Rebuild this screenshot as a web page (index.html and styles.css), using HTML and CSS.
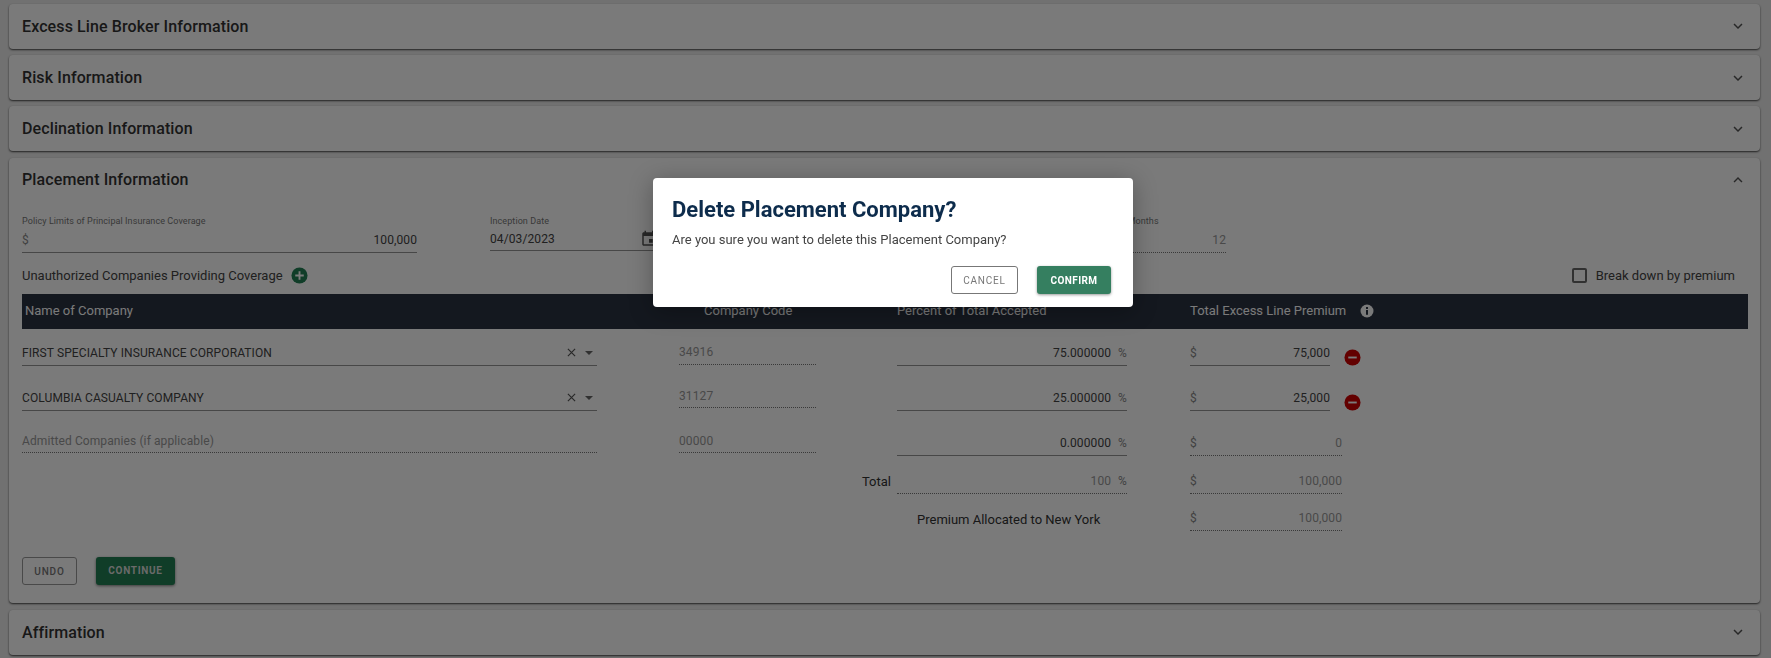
FILE: index.html
```html
<!DOCTYPE html>
<html lang="en">
<head>
  <meta charset="UTF-8">
  <meta name="viewport" content="width=device-width, initial-scale=1.0">
  <title>Placement Information</title>
  <link rel="stylesheet" href="styles.css">
</head>
<body>
  <div class="accordion">
    <section class="panel">
      <div class="panel-head"><h2>Excess Line Broker Information</h2><svg class="chevron" viewBox="0 0 24 24"><path d="M7.4 8.6 12 13.2l4.6-4.6L18 10l-6 6-6-6z"/></svg></div>
    </section>
    <section class="panel">
      <div class="panel-head"><h2>Risk Information</h2><svg class="chevron" viewBox="0 0 24 24"><path d="M7.4 8.6 12 13.2l4.6-4.6L18 10l-6 6-6-6z"/></svg></div>
    </section>
    <section class="panel">
      <div class="panel-head"><h2>Declination Information</h2><svg class="chevron" viewBox="0 0 24 24"><path d="M7.4 8.6 12 13.2l4.6-4.6L18 10l-6 6-6-6z"/></svg></div>
    </section>

    <section class="panel panel-open">
      <div class="panel-head"><h2>Placement Information</h2><svg class="chevron" viewBox="0 0 24 24"><path d="M12 8l6 6-1.4 1.4-4.6-4.6-4.6 4.6L6 14z"/></svg></div>

      <!-- Top fields -->
      <div class="top-fields">
        <div class="top-field">
          <label>Policy Limits of Principal Insurance Coverage</label>
          <div class="field"><span class="affix">$</span><span>100,000</span></div>
        </div>
        <div class="top-field">
          <label>Inception Date</label>
          <div class="field field-date">
            <span>04/03/2023</span>
            <svg class="calendar" viewBox="0 0 24 24"><path d="M17 12h-5v5h5v-5zM16 1v2H8V1H6v2H5c-1.1 0-2 .9-2 2v14c0 1.1.9 2 2 2h14c1.1 0 2-.9 2-2V5c0-1.1-.9-2-2-2h-1V1h-2zm3 18H5V8h14v11z"/></svg>
          </div>
        </div>
        <div class="top-field"></div>
        <div class="top-field">
          <label>Policy Term in Months</label>
          <div class="field field-off"><span></span><span class="muted">12</span></div>
        </div>
      </div>

      <div class="companies-bar">
        <div class="companies-title">
          <span>Unauthorized Companies Providing Coverage</span>
          <svg class="round-icon" viewBox="0 0 18 18"><circle class="fill-add" cx="9" cy="9" r="8.5"/><path class="glyph" d="M8 4.5h2V8h3.5v2H10v3.5H8V10H4.500V8H8z"/></svg>
        </div>
        <div class="breakdown"><span class="checkbox"></span><span>Break down by premium</span></div>
      </div>

      <!-- Company table -->
      <div class="table-head grid">
        <div class="name-head">Name of Company</div>
        <div class="code-head">Company Code</div>
        <div>Percent of Total Accepted</div>
        <div class="premium-head">
          <span>Total Excess Line Premium</span>
          <svg class="info" viewBox="0 0 14 14"><circle cx="7" cy="7" r="6.500"/><path class="info-i" d="M6 6h2v4.800H6zM6 3h2v2H6z"/></svg>
        </div>
      </div>

      <div class="grid row row-first">
        <div class="field field-name">
          <span>FIRST SPECIALTY INSURANCE CORPORATION</span>
          <span class="select-tools"><svg class="clear" viewBox="0 0 10 10"><path d="M1 1l8 8M9 1 1 9"/></svg><i class="caret"></i></span>
        </div>
        <div class="field field-off field-code code-first"><span class="muted">34916</span></div>
        <div class="field field-pct"><span>75.000000</span><span class="affix pct">%</span></div>
        <div class="premium-cell">
          <div class="field field-money"><span class="affix">$</span><span>75,000</span></div>
          <svg class="round-icon remove" viewBox="0 0 18 18"><circle class="fill-del" cx="9" cy="9" r="8.500"/><path class="glyph" d="M4.500 8h9v2h-9z"/></svg>
        </div>
      </div>

      <div class="grid row">
        <div class="field field-name">
          <span>COLUMBIA CASUALTY COMPANY</span>
          <span class="select-tools"><svg class="clear" viewBox="0 0 10 10"><path d="M1 1l8 8M9 1 1 9"/></svg><i class="caret"></i></span>
        </div>
        <div class="field field-off field-code"><span class="muted">31127</span></div>
        <div class="field field-pct"><span>25.000000</span><span class="affix pct">%</span></div>
        <div class="premium-cell">
          <div class="field field-money"><span class="affix">$</span><span>25,000</span></div>
          <svg class="round-icon remove" viewBox="0 0 18 18"><circle class="fill-del" cx="9" cy="9" r="8.500"/><path class="glyph" d="M4.500 8h9v2h-9z"/></svg>
        </div>
      </div>

      <div class="grid row">
        <div class="field field-off field-name field-code"><span class="muted">Admitted Companies (if applicable)</span></div>
        <div class="field field-off field-code"><span class="muted">00000</span></div>
        <div class="field field-pct"><span>0.000000</span><span class="affix pct">%</span></div>
        <div class="field field-off field-total"><span class="affix">$</span><span class="muted">0</span></div>
      </div>

      <div class="grid row row-total">
        <div></div>
        <div class="total-label">Total</div>
        <div class="field field-off field-pct"><span class="muted">100</span><span class="affix pct">%</span></div>
        <div class="field field-off field-total"><span class="affix">$</span><span class="muted">100,000</span></div>
      </div>

      <div class="grid row row-alloc">
        <div></div>
        <div></div>
        <div class="alloc-label">Premium Allocated to New York</div>
        <div class="field field-off field-total"><span class="affix">$</span><span class="muted">100,000</span></div>
      </div>

      <div class="panel-actions">
        <button class="btn btn-outline" type="button">UNDO</button>
        <button class="btn btn-solid" type="button">CONTINUE</button>
      </div>
    </section>

    <section class="panel">
      <div class="panel-head"><h2>Affirmation</h2><svg class="chevron" viewBox="0 0 24 24"><path d="M7.4 8.6 12 13.2l4.6-4.6L18 10l-6 6-6-6z"/></svg></div>
    </section>
  </div>

  <!-- Confirm dialog -->
  <div class="overlay"></div>
  <div class="dialog">
    <h3>Delete Placement Company?</h3>
    <p>Are you sure you want to delete this Placement Company?</p>
    <div class="dialog-actions">
      <button class="btn btn-cancel" type="button">CANCEL</button>
      <button class="btn btn-confirm" type="button">CONFIRM</button>
    </div>
  </div>
</body>
</html>
```

FILE: styles.css
```css
html, body {
  height: 658px;
  overflow: hidden;
}
body {
  margin: 0;
  background-color: #ececec;
  font-family: Roboto, "Liberation Sans", sans-serif;
  font-size: 12px;
  color: #444;
}
.accordion {
  display: flex;
  flex-direction: column;
  gap: 6.4px;
  padding: 4px 11px 0 9px;
}
.panel {
  background-color: #fff;
  border-radius: 4px;
  box-shadow: 0 1px 2px rgba(0,0,0,.7);
}
.panel-head {
  display: flex;
  align-items: center;
  justify-content: space-between;
  height: 44.800px;
  padding: 0 13px;
}
.panel-head h2 {
  margin: 0;
  font-size: 16px;
  font-weight: 500;
  letter-spacing: .11px;
  color: #333;
}
.chevron {
  width: 18px;
  height: 18px;
  fill: #555;
}
.panel-open {
  padding: 0 12px 18px 13px;
}
.panel-open .panel-head {
  padding: 0;
  margin-right: 1px;
}

/* top fields */
.top-fields {
  display: grid;
  grid-template-columns: 468px 243px 335px 158px;
  margin-top: 13px;
}
.top-field label {
  display: block;
  font-size: 9px;
  line-height: 12px;
  letter-spacing: .08px;
  color: #777;
}
.field {
  display: flex;
  align-items: center;
  justify-content: space-between;
  height: 24px;
  padding-bottom: 2px;
  border-bottom: 1px solid #949494;
  box-sizing: border-box;
  letter-spacing: .1px;
}
.top-field .field {
  height: 26px;
  width: 395px;
  padding-bottom: 0;
}
.top-field .field-date {
  width: 170px;
  height: 24px;
}
.top-field .field-off {
  width: 158px;
}
.field-off {
  border-bottom: 1px dotted #777;
}
.affix {
  color: #888;
}
.muted {
  color: #999;
}
.calendar {
  width: 18px;
  height: 18px;
  margin-right: 2px;
  fill: #555;
}

/* heading over the table */
.companies-bar {
  display: flex;
  align-items: center;
  justify-content: space-between;
  margin-top: 13px;
  height: 18px;
  font-size: 13px;
}
.companies-title {
  display: flex;
  align-items: center;
  gap: 8px;
}
.round-icon {
  width: 17px;
  height: 17px;
}
.fill-add {
  fill: #228054;
}
.fill-del {
  fill: #d00000;
}
.glyph {
  fill: #fff;
}
.breakdown {
  display: flex;
  align-items: center;
  gap: 9px;
  margin-right: 13px;
}
.checkbox {
  width: 15px;
  height: 15px;
  border: 2px solid #666;
  border-radius: 2px;
  box-sizing: border-box;
}

/* table */
.grid {
  display: grid;
  grid-template-columns: 657px 218px 293px 1fr;
}
.table-head {
  align-items: center;
  box-sizing: border-box;
  height: 35px;
  padding-bottom: 2px;
  margin-top: 10px;
  background-color: #2a3242;
  color: #fff;
  font-size: 13px;
}
.name-head {
  padding-left: 3px;
}
.code-head {
  padding-left: 25px;
}
.premium-head {
  display: flex;
  align-items: center;
  gap: 14px;
}
.info {
  width: 14px;
  height: 14px;
  fill: #fff;
}
.info-i {
  fill: #2a3242;
}
.row {
  align-items: start;
  margin-top: 21px;
}
.row-first {
  margin-top: 13px;
}
.row-total {
  margin-top: 14px;
}
.row-alloc {
  margin-top: 13px;
}
.field-name {
  width: 575px;
}
.field-code {
  width: 137px;
  height: 21px;
  padding-bottom: 2px;
}
.field-name.field-code {
  width: 575px;
}
.code-first {
  height: 23px;
  padding-bottom: 3px;
}
.field-pct {
  justify-content: flex-end;
  width: 230px;
  gap: 7px;
}
.pct {
  font-size: 12px;
}
.field-money {
  width: 140px;
}
.field-total {
  width: 152px;
}
.premium-cell {
  display: flex;
  align-items: flex-start;
}
.remove {
  margin: 7px 0 0 14px;
}
.select-tools {
  display: flex;
  align-items: center;
  gap: 9px;
  margin-right: 4px;
}
.clear {
  width: 9px;
  height: 9px;
  stroke: #555;
  stroke-width: 1.300;
  fill: none;
}
.caret {
  width: 0;
  height: 0;
  border-left: 4.500px solid transparent;
  border-right: 4.500px solid transparent;
  border-top: 4.500px solid #666;
}
.total-label {
  height: 24px;
  line-height: 24px;
  text-align: right;
  padding-right: 6px;
  font-size: 13px;
  color: #333;
}
.alloc-label {
  height: 24px;
  line-height: 26px;
  padding-left: 20px;
  font-size: 13px;
  color: #333;
}

/* buttons */
.panel-actions {
  display: flex;
  gap: 19px;
  margin-top: 26px;
}
.btn {
  height: 28px;
  padding: 0;
  border-radius: 3px;
  font-family: Roboto, "Liberation Sans", sans-serif;
  font-size: 10px;
  letter-spacing: .8px;
  box-sizing: border-box;
  cursor: pointer;
}
.btn-outline {
  width: 55px;
  background: #fff;
  border: 1px solid #999;
  color: #777;
  font-weight: 500;
}
.btn-solid {
  width: 79px;
  padding-bottom: 2px;
  background-color: #228054;
  border: none;
  color: #ddd;
  font-weight: 700;
  letter-spacing: .7px;
  box-shadow: 0 1px 3px rgba(0,0,0,.5);
}

/* dialog */
.overlay {
  position: fixed;
  inset: 0;
  background-color: rgba(0,0,0,.52);
}
.dialog {
  position: absolute;
  left: 653px;
  top: 178px;
  width: 480px;
  height: 129px;
  box-sizing: border-box;
  padding: 18px 22px 0 19px;
  background-color: #fff;
  border-radius: 4px;
  box-shadow: 0 4px 24px rgba(0,0,0,.3);
}
.dialog h3 {
  margin: 0;
  font-size: 22px;
  line-height: 28px;
  font-weight: 700;
  color: #0d2c4c;
}
.dialog p {
  margin: 8px 0 0;
  font-size: 13px;
  line-height: 16px;
  color: #444;
}
.dialog-actions {
  display: flex;
  justify-content: flex-end;
  gap: 19px;
  margin-top: 18px;
}
.btn-cancel {
  width: 67px;
  background: #fff;
  border: 1px solid #777;
  color: #777;
}
.btn-confirm {
  width: 74px;
  background-color: #357f60;
  border: none;
  color: #fff;
  font-weight: 700;
  letter-spacing: .4px;
  box-shadow: 0 1px 3px rgba(0,0,0,.4);
}
```
